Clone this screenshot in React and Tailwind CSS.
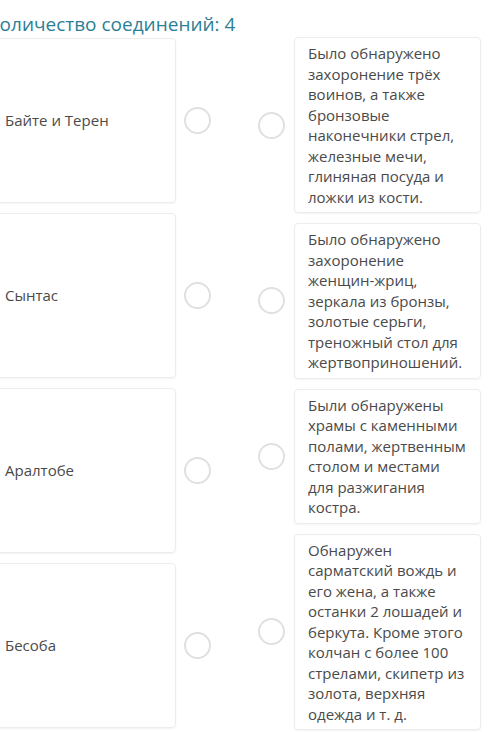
import React from "react";

const left = ["Байте и Терен", "Сынтас", "Аралтобе", "Бесоба"];
const right = [
  "Было обнаружено захоронение трёх воинов, а также бронзовые наконечники стрел, железные мечи, глиняная посуда и ложки из кости.",
  "Было обнаружено захоронение женщин-жриц, зеркала из бронзы, золотые серьги, треножный стол для жертвоприношений.",
  "Были обнаружены храмы с каменными полами, жертвенным столом и местами для разжигания костра.",
  "Обнаружен сарматский вождь и его жена, а также останки 2 лошадей и беркута. Кроме этого колчан с более 100 стрелами, скипетр из золота, верхняя одежда и т. д.",
];

function Circle() {
  return <div className="w-[27px] h-[27px] shrink-0 rounded-full border-2 border-[#e0e0e0] bg-white" />;
}

export default function App() {
  return (
    <div
      className="w-[494px] h-[732px] overflow-hidden bg-white"
      style={{ fontFamily: '"Open Sans", "Noto Sans", sans-serif' }}
    >
      <div className="-ml-[12px] pt-[12px]">
        <div className="text-[19px] leading-[25px] text-[#2b7f95] mb-[1px]">Количество соединений: 4</div>
        <div className="flex items-start">
          <div className="flex flex-col gap-[10px] w-[224px]">
            {left.map((t) => (
              <div key={t} className="flex items-center gap-[8px]">
                <div className="w-[188px] h-[165px] flex items-center pl-[16px] rounded-[4px] border border-[#ececec] shadow-[0_1px_2px_rgba(0,0,0,0.05)] text-[15px] text-[#4a4a4a]">
                  {t}
                </div>
                <Circle />
              </div>
            ))}
          </div>
          <div className="flex flex-col gap-[10px] ml-[46px] -mt-[1px]">
            {right.map((t, i) => (
              <div key={i} className="flex items-center gap-[9px]">
                <Circle />
                <div className="w-[187px] rounded-[4px] border border-[#ececec] shadow-[0_1px_2px_rgba(0,0,0,0.05)] px-[13px] py-[5px] text-[15px] leading-[20.5px] text-[#4a4a4a]">
                  {t}
                </div>
              </div>
            ))}
          </div>
        </div>
      </div>
    </div>
  );
}
